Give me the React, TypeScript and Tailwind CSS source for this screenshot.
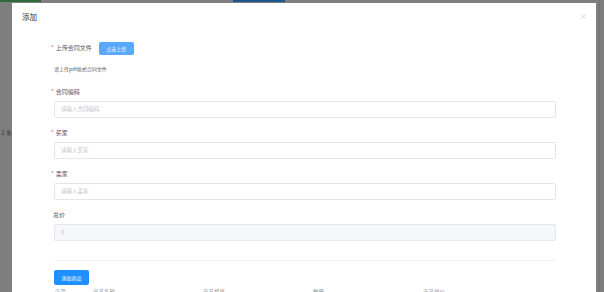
import { X } from "lucide-react";

const font = { fontFamily: '"Noto Sans CJK SC", "Noto Sans", sans-serif' };

const fields = [
  { label: "合同编码", placeholder: "请输入合同编码", required: true },
  { label: "买家", placeholder: "请输入买家", required: true },
  { label: "卖家", placeholder: "请输入卖家", required: true },
];

const columns = ["商品名称", "商品规格", "数量", "商品单价"];

function Label({ text, required }: { text: string; required?: boolean }) {
  return (
    <div className="h-[10px] flex items-center text-[6px] text-[#4f545c] leading-none">
      {required && <span className="text-[#f56c6c] mr-[2px] -ml-[3px]">*</span>}
      <span className={required ? "" : "-ml-[1px]"}>{text}</span>
    </div>
  );
}

export default function App() {
  return (
    <div className="relative w-[604px] h-[292px] overflow-hidden bg-[#7f7f7f]" style={font}>
      {/* page behind the mask */}
      <div className="absolute left-0 top-0 w-[41px] h-[2px] bg-[#2f6b3a]" />
      <div className="absolute left-[233px] top-0 w-[52px] h-[2px] bg-[#1c5690]" />
      <div className="absolute left-[-6px] top-[130px] text-[6px] text-[#3c3c3c] leading-none">共 2 条</div>
      <div className="absolute left-[599px] top-0 w-[1px] h-[292px] bg-[#747474]" />

      {/* dialog */}
      <div className="absolute left-[12px] top-[3px] w-[584px] h-[310px] bg-white">
        <div className="relative h-[28px] flex items-center pl-[10px]">
          <span className="text-[7.5px] text-[#303133] leading-none">添加</span>
          <X size={7} strokeWidth={2} className="absolute right-[9px] top-[10px] text-[#b5b8bd]" />
        </div>

        <div className="pl-[42px] pr-[40px]">
          <div className="mt-[10px] h-[14px] flex items-center">
            <Label text="上传合同文件" required />
            <button className="ml-[7px] h-[13px] w-[35px] rounded-[2px] bg-[#5aa9ff] text-white text-[5px] leading-none">
              点击上传
            </button>
          </div>
          <div className="mt-[8px] h-[10px] flex items-center text-[5px] text-[#606266] leading-none">
            请上传pdf格式合同文件
          </div>

          {fields.map((f, i) => (
            <div key={f.label} className={i === 0 ? "mt-[14px]" : "mt-[10px]"}>
              <Label text={f.label} required={f.required} />
              <div className="mt-[4px] h-[17px] border border-[#e2e5ea] rounded-[2px] flex items-center pl-[6px] text-[5.5px] text-[#c0c4cc] leading-none">
                {f.placeholder}
              </div>
            </div>
          ))}

          <div className="mt-[10px]">
            <Label text="总价" />
          </div>
          <div className="mt-[4px] h-[17px] border border-[#e4e7ed] bg-[#f5f7fa] rounded-[2px] flex items-center pl-[6px] text-[5.5px] text-[#c0c4cc] leading-none">
            0
          </div>

          <div className="mt-[19px] h-[1px] bg-[#f0f2f5]" />

          <button className="mt-[9px] h-[15px] w-[35px] rounded-[2px] bg-[#1e90ff] text-white text-[5px] leading-none">
            添加商品
          </button>

          <div className="mt-[3px] h-[10px] flex items-center text-[5.5px] text-[#909399] leading-none">
            <div className="w-[39px] pl-[1px]">序号</div>
            {columns.map((c) => (
              <div key={c} className="w-[110px]">
                {c}
              </div>
            ))}
          </div>
        </div>
      </div>
    </div>
  );
}
